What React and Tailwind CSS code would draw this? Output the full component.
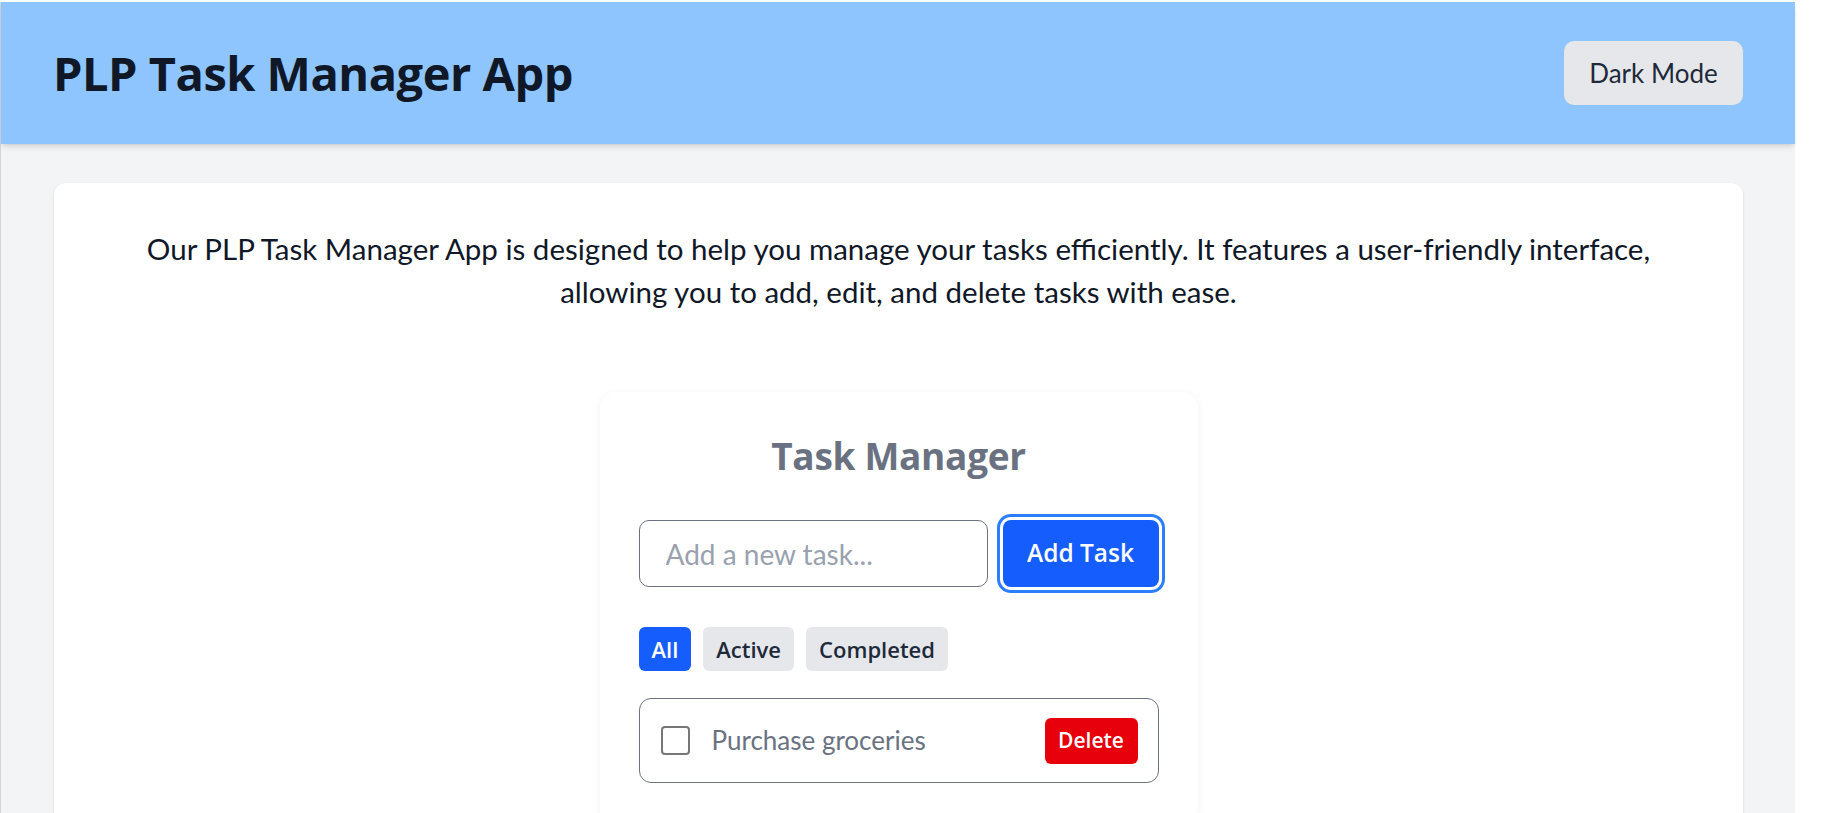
export default function App() {
  return (
    <div className="flex h-[813px] w-[1840px] overflow-hidden bg-white font-['Lato',sans-serif]">
      <div className="mt-[2px] flex w-[1795px] shrink-0 flex-col border-l border-gray-300 bg-gray-100">
        <header className="relative z-10 flex h-[142px] shrink-0 items-center justify-between bg-blue-300 pl-[52px] pr-[52px] shadow-md">
          <h1 className="font-['Open_Sans',sans-serif] text-[47px] font-bold leading-none tracking-[-0.5px] text-gray-900">PLP Task Manager App</h1>
          <button className="h-[64px] w-[179px] rounded-[10px] bg-gray-200 text-[26px] text-gray-800">
            Dark Mode
          </button>
        </header>
        <main className="pl-[53px] pr-[52px] pt-[39px]">
          <div className="rounded-[12px] bg-white px-12 pb-16 pt-[44px] shadow-sm">
            <p className="text-center text-[29.5px] leading-[43px] text-gray-900">
              Our PLP Task Manager App is designed to help you manage your tasks efficiently. It features a user-friendly interface,
              <br />
              allowing you to add, edit, and delete tasks with ease.
            </p>
            <div className="mx-auto mt-[79px] w-[598px] rounded-[15px] bg-white px-[39px] pb-10 pt-[40px] shadow-[0_2px_10px_rgba(0,0,0,0.06)]">
              <h2 className="text-center font-['Open_Sans',sans-serif] text-[37px] font-bold leading-[48px] tracking-[-0.3px] text-gray-500">Task Manager</h2>
              <div className="mt-[40px] flex items-center gap-[15px]">
                <input
                  type="text"
                  placeholder="Add a new task..."
                  className="h-[67px] min-w-0 flex-1 rounded-[10px] border border-gray-500 bg-white px-[26px] text-[28px] text-gray-900 outline-none placeholder:text-gray-400"
                />
                <button className="h-[67px] w-[156px] rounded-[8px] bg-blue-600 font-['Open_Sans',sans-serif] text-[24.5px] font-semibold text-white ring-[3px] ring-blue-500 ring-offset-[3px]">
                  Add Task
                </button>
              </div>
              <div className="mt-[40px] flex items-center gap-[12px]">
                <button className="h-[44px] rounded-[6px] bg-blue-600 px-[13px] font-['Open_Sans',sans-serif] text-[22px] font-semibold text-white">All</button>
                <button className="h-[44px] rounded-[6px] bg-gray-200 px-[13px] font-['Open_Sans',sans-serif] text-[22px] font-semibold text-gray-800">Active</button>
                <button className="h-[44px] rounded-[6px] bg-gray-200 px-[13px] font-['Open_Sans',sans-serif] text-[22px] font-semibold text-gray-800">Completed</button>
              </div>
              <div className="mt-[27px] flex h-[85px] items-center rounded-[12px] border border-gray-500 pl-[21px] pr-[20px]">
                <div className="h-[29px] w-[29px] shrink-0 rounded-[4px] border-2 border-[#777]" />
                <span className="ml-[22px] flex-1 text-[26px] text-gray-500">Purchase groceries</span>
                <button className="h-[46px] w-[93px] rounded-[6px] bg-red-600 font-['Open_Sans',sans-serif] text-[21px] font-semibold text-white">Delete</button>
              </div>
            </div>
          </div>
        </main>
      </div>
    </div>
  );
}
